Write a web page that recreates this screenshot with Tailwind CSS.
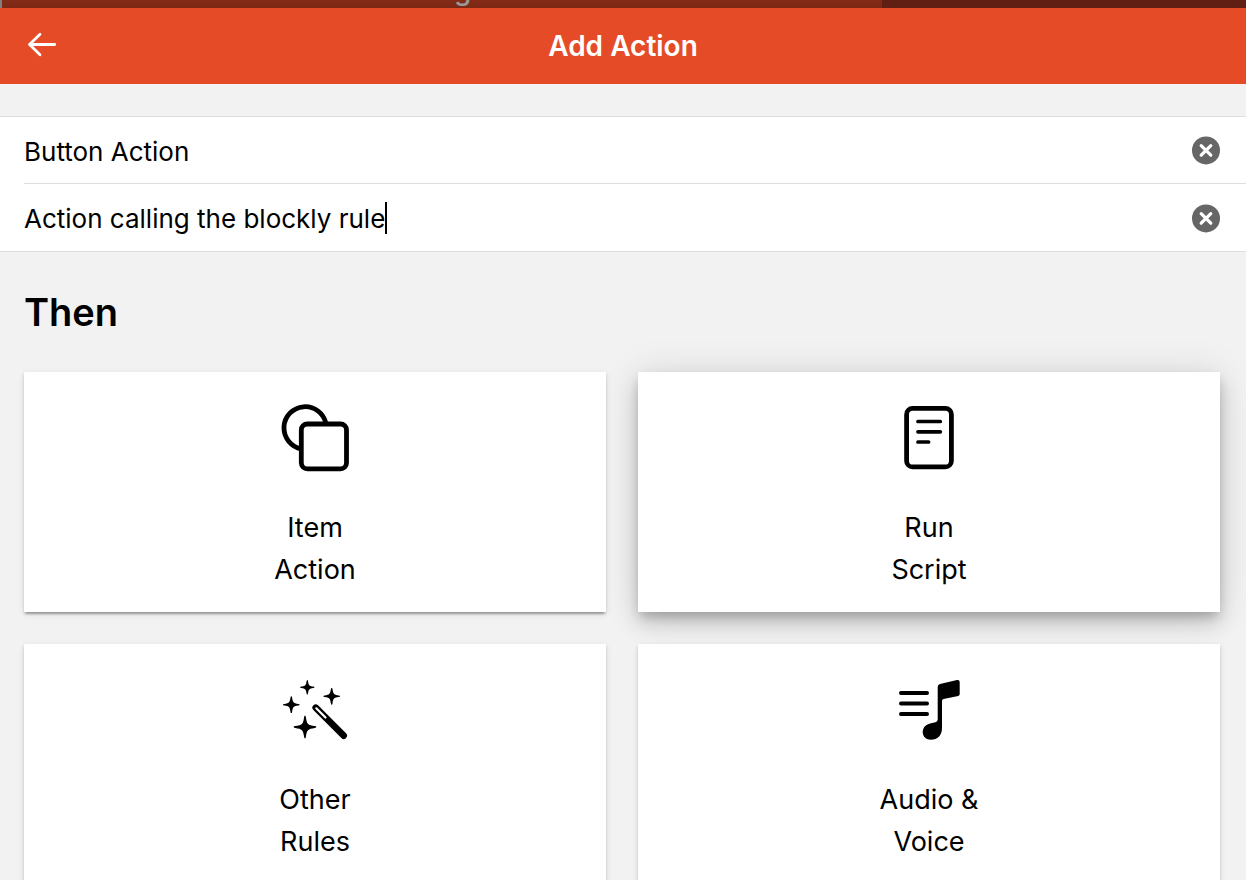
<!DOCTYPE html>
<html lang="en">
<head>
    <meta charset="UTF-8">
    <meta name="viewport" content="width=device-width, initial-scale=1.0">
    <title>Add Action</title>
    <script src="https://cdn.jsdelivr.net/npm/@tailwindcss/browser@4"></script>
</head>
<body class="h-screen overflow-hidden bg-[#f2f2f2] font-['Inter','Liberation_Sans',sans-serif] text-black">
    <!-- Dimmed page behind the popup -->
    <div class="flex h-2 overflow-hidden bg-linear-to-b from-[#832b17] to-[#7c2815] text-[#999]" aria-hidden="true">
        <div class="w-[2px] bg-[#808080]"></div>
        <div class="relative flex-1">
            <span class="absolute bottom-1 left-[452px] text-[28px] leading-7 font-medium">g</span>
        </div>
        <div class="w-[364px] bg-[#601f12]"></div>
    </div>

    <!-- Navbar -->
    <header class="grid h-19 grid-cols-[84px_1fr_84px] items-center bg-[#e44b26] text-white">
        <a href="#" aria-label="Back" class="pl-6">
            <svg class="h-9 w-9" viewBox="0 0 36 36" fill="none" stroke="currentColor" stroke-width="2.8" stroke-linecap="round" stroke-linejoin="round">
                <path d="M30.700 16.500H5.500M16 6.300L5.500 16.500L16 26.700"></path>
            </svg>
        </a>
        <h1 class="text-center text-[28px] font-semibold">Add Action</h1>
    </header>

    <main>
        <!-- Name and description -->
        <form class="mt-8 border-y border-[#dedede] bg-white pl-6">
            <div class="flex h-[67px] items-center border-b border-[#dedede] pr-6">
                <input type="text" aria-label="Title" value="Button Action" class="h-11 flex-1 pt-[2px] text-[26px] outline-none">
                <button type="button" aria-label="Clear title" class="text-[#666]">
                    <svg class="h-8 w-8" viewBox="0 0 32 32">
                        <circle cx="16" cy="16.400" r="14" fill="currentColor"></circle>
                        <path d="M11.200 11.600l9.600 9.600M20.800 11.600l-9.600 9.600" stroke="#fff" stroke-width="3.200" stroke-linecap="round"></path>
                    </svg>
                </button>
            </div>
            <div class="relative flex h-[67px] items-center pr-6">
                <input type="text" aria-label="Description" value="Action calling the blockly rule" class="h-11 flex-1 pt-[2px] text-[26px] outline-none">
                <span class="absolute left-[361px] h-8 w-[2px] bg-black"></span>
                <button type="button" aria-label="Clear description" class="text-[#666]">
                    <svg class="h-8 w-8" viewBox="0 0 32 32">
                        <circle cx="16" cy="16.400" r="14" fill="currentColor"></circle>
                        <path d="M11.200 11.600l9.600 9.600M20.800 11.600l-9.600 9.600" stroke="#fff" stroke-width="3.200" stroke-linecap="round"></path>
                    </svg>
                </button>
            </div>
        </form>

        <h2 class="px-6 pt-9 pb-9 text-[38px] leading-12 font-semibold">Then</h2>

        <!-- Action types -->
        <div class="grid grid-cols-2 gap-8 pr-[26px] pl-6">
            <button type="button" class="flex h-60 flex-col items-center bg-white pt-[30px] text-[27px] leading-[42px] shadow-[0_4px_2px_-2px_rgba(0,0,0,0.2),0_2px_2px_0_rgba(0,0,0,0.14),0_2px_6px_0_rgba(0,0,0,0.12)]">
                <svg class="mb-[33px] h-18 w-18" viewBox="0 0 72 72" fill="none" stroke="currentColor" stroke-width="4.800">
                    <path d="M46.900 21.500A21.200 21.200 0 1 0 22.500 46.800"></path>
                    <rect x="22.300" y="22" width="45.200" height="44.800" rx="6"></rect>
                </svg>
                <span>Item<br>Action</span>
            </button>
            <button type="button" class="flex h-60 flex-col items-center bg-white pt-[30px] text-[27px] leading-[42px] shadow-[0_6px_10px_-2px_rgba(0,0,0,0.2),0_12px_20px_0_rgba(0,0,0,0.14),0_2px_36px_0_rgba(0,0,0,0.12)]">
                <svg class="mb-[33px] h-18 w-18" viewBox="0 0 72 72" fill="none" stroke="currentColor" stroke-linecap="round">
                    <rect x="13.600" y="6.400" width="44.800" height="58.500" rx="6" stroke-width="4.800"></rect>
                    <path d="M25 19.500H47.300M25 29.800H47.300M25 40H35.600" stroke-width="3.700"></path>
                </svg>
                <span>Run<br>Script</span>
            </button>
            <button type="button" class="flex h-60 flex-col items-center bg-white pt-[30px] text-[27px] leading-[42px] shadow-[0_4px_2px_-2px_rgba(0,0,0,0.2),0_2px_2px_0_rgba(0,0,0,0.14),0_2px_6px_0_rgba(0,0,0,0.12)]">
                <svg class="mb-[33px] h-18 w-18" viewBox="0 0 72 72" fill="currentColor">
                    <path d="M28.300 6Q28.800 6 29 7.200C29.600 11.200 30.300 12 34.200 12.600Q35.500 12.800 35.500 13.300Q35.500 13.800 34.200 14C30.300 14.600 29.600 15.400 29 19.400Q28.800 20.600 28.300 20.600Q27.800 20.600 27.600 19.400C27 15.400 26.300 14.600 22.400 14Q21.100 13.800 21.100 13.300Q21.100 12.800 22.400 12.600C26.300 12 27 11.200 27.600 7.200Q27.800 6 28.300 6Z"></path>
                    <path d="M12.300 22.300Q12.900 22.300 13.100 23.500C13.800 28.500 14.500 29.200 19.300 29.900Q20.700 30.100 20.700 30.700Q20.700 31.300 19.300 31.500C14.500 32.200 13.800 32.900 13.100 37.900Q12.900 39.100 12.300 39.100Q11.700 39.100 11.500 37.900C10.800 32.900 10.100 32.200 5.300 31.500Q3.900 31.300 3.900 30.700Q3.900 30.100 5.300 29.900C10.100 29.200 10.800 28.500 11.500 23.500Q11.700 22.300 12.300 22.300Z"></path>
                    <path d="M52.700 13.900Q53.300 13.900 53.500 15.100C54.200 20.100 54.900 20.800 59.700 21.500Q61.100 21.700 61.100 22.300Q61.100 22.900 59.700 23.100C54.900 23.800 54.200 24.500 53.500 29.500Q53.300 30.700 52.700 30.700Q52.100 30.700 51.900 29.500C51.200 24.500 50.500 23.800 45.700 23.100Q44.300 22.900 44.300 22.300Q44.300 21.700 45.700 21.500C50.500 20.800 51.200 20.100 51.900 15.100Q52.100 13.900 52.700 13.900Z"></path>
                    <path d="M26 41.600Q26.700 41.600 26.900 43.200C27.900 50.200 28.800 51.100 35.800 52.100Q37.400 52.300 37.400 53Q37.400 53.700 35.800 53.900C28.800 54.900 27.900 55.800 26.900 62.800Q26.700 64.400 26 64.400Q25.300 64.400 25.100 62.800C24.100 55.800 23.200 54.900 16.200 53.900Q14.600 53.700 14.600 53Q14.600 52.300 16.200 52.100C23.200 51.100 24.100 50.200 25.100 43.200Q25.300 41.600 26 41.600Z"></path>
                    <path d="M36.700 33.700L64.700 61.700" fill="none" stroke="currentColor" stroke-width="6.600" stroke-linecap="round"></path>
                    <path d="M37.300 34.300L46.500 43.500" fill="none" stroke="#fff" stroke-width="2.200" stroke-linecap="round"></path>
                </svg>
                <span>Other<br>Rules</span>
            </button>
            <button type="button" class="flex h-60 flex-col items-center bg-white pt-[30px] text-[27px] leading-[42px] shadow-[0_4px_2px_-2px_rgba(0,0,0,0.2),0_2px_2px_0_rgba(0,0,0,0.14),0_2px_6px_0_rgba(0,0,0,0.12)]">
                <svg class="mb-[33px] h-18 w-18" viewBox="0 0 72 72" fill="currentColor">
                    <path d="M8 19.100H34M8 29.600H34M8 40.100H34" stroke="currentColor" stroke-width="4" stroke-linecap="round"></path>
                    <path d="M44.700 13Q44.700 10.700 47 10L64 6.100Q66.700 5.700 66.700 8.200V20Q66.700 21.500 65.200 21.900L50.500 25Q49 25.400 49 27V54C49 61.500 44.500 65.700 38 65.700C33 65.700 29.700 62.500 29.700 58C29.700 53.500 33 50.300 38 49.200L42.500 48.200Q44.700 47.600 44.700 45.500Z"></path>
                </svg>
                <span>Audio &amp;<br>Voice</span>
            </button>
        </div>
    </main>
</body>
</html>
